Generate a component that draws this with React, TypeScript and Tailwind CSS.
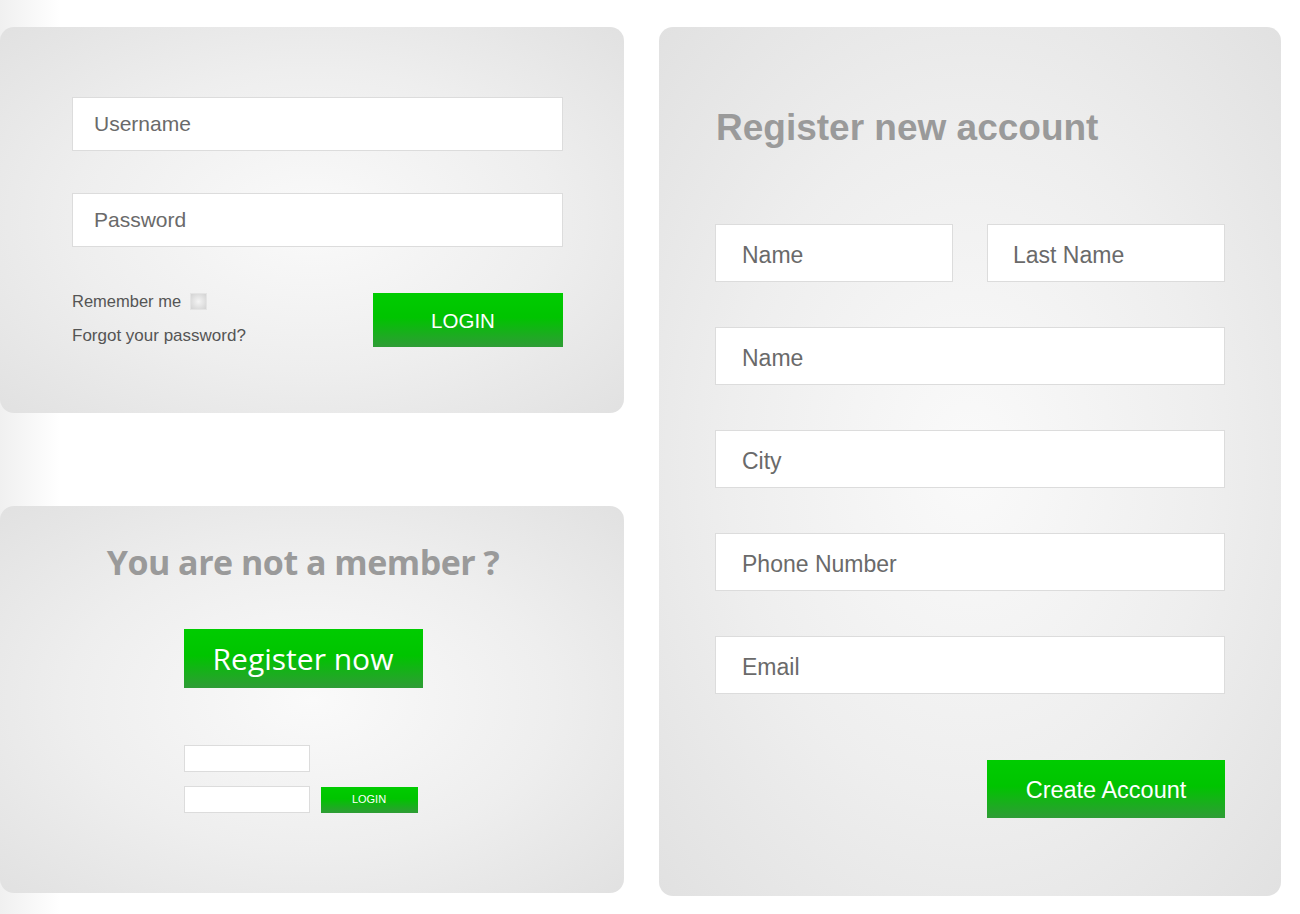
import React from "react";

const panelBg =
  "bg-[radial-gradient(ellipse_at_center,#fafafa_0%,#eeeeee_55%,#e1e1e1_100%)]";
const greenBtn =
  "bg-[linear-gradient(to_bottom,#00cc00_0%,#00c400_45%,#2f9c36_100%)] text-white";

function Field({ label, className }: { label: string; className: string }) {
  return (
    <div
      className={`flex items-center bg-white border border-[#dcdcdc] text-[#6a6a6a] ${className}`}
    >
      {label}
    </div>
  );
}

export default function App() {
  return (
    <div
      className="w-[1300px] h-[914px] bg-[linear-gradient(to_right,#f0f0f0_0px,#ffffff_60px)] pt-[27px] flex gap-[35px] overflow-hidden"
      style={{ fontFamily: '"Liberation Sans", Arial, sans-serif' }}
    >
      <div className="w-[624px] flex flex-col gap-[93px]">
        {/* login */}
        <div className={`h-[386px] rounded-[14px] ${panelBg} pt-[70px] px-[72px] pr-[61px]`}>
          <Field label="Username" className="h-[54px] pl-[21px] text-[21px]" />
          <Field label="Password" className="h-[54px] pl-[21px] text-[21px] mt-[42px]" />
          <div className="flex justify-between mt-[46px]">
            <div className="text-[16.5px] text-[#555]">
              <div className="flex items-center h-[18px] mt-[-1px]">
                Remember me
                <span className="ml-[9px] w-[17px] h-[17px] border border-[#e4e4e4] bg-[radial-gradient(circle,#f4f4f4_0%,#d2d2d2_100%)]" />
              </div>
              <div className="mt-[13px] text-[17px]">Forgot your password?</div>
            </div>
            <button className={`w-[190px] h-[54px] ${greenBtn} text-[20.5px] pt-[2px] pr-[10px]`}>
              LOGIN
            </button>
          </div>
        </div>

        {/* register teaser */}
        <div className={`h-[387px] rounded-[14px] ${panelBg} flex flex-col items-center pr-[18px]`}>
          <div
            className="mt-[31px] text-[#9a9a9a] text-[34px] font-bold tracking-[-0.5px]"
            style={{ fontFamily: '"Open Sans", sans-serif' }}
          >
            You are not a member ?
          </div>
          <button
            className={`mt-[41px] w-[239px] h-[59px] ${greenBtn} text-[30px]`}
            style={{ fontFamily: '"Open Sans", sans-serif' }}
          >
            Register now
          </button>
          <div className="mt-[57px] w-[234px] mr-[5px]">
            <div className="w-[126px] h-[27px] bg-white border border-[#dcdcdc]" />
            <div className="flex items-center gap-[11px] mt-[14px]">
              <div className="w-[126px] h-[27px] bg-white border border-[#dcdcdc]" />
              <button className={`w-[97px] h-[26px] ${greenBtn} text-[11px]`}>LOGIN</button>
            </div>
          </div>
        </div>
      </div>

      {/* register form */}
      <div className={`w-[622px] h-[869px] rounded-[14px] ${panelBg} pl-[56px] pr-[56px]`}>
        <div className="mt-[80px] text-[37px] font-bold text-[#9a9a9a] leading-[42px] pl-[1px]">
          Register new account
        </div>
        <div className="flex gap-[34px] mt-[75px]">
          <Field label="Name" className="w-[238px] h-[58px] pl-[26px] pt-[4px] text-[23px]" />
          <Field label="Last Name" className="w-[238px] h-[58px] pl-[25px] pt-[4px] text-[23px]" />
        </div>
        <div className="flex flex-col gap-[45px] mt-[45px]">
          <Field label="Name" className="w-[510px] h-[58px] pl-[26px] pt-[4px] text-[23px]" />
          <Field label="City" className="w-[510px] h-[58px] pl-[26px] pt-[4px] text-[23px]" />
          <Field label="Phone Number" className="w-[510px] h-[58px] pl-[26px] pt-[4px] text-[23px]" />
          <Field label="Email" className="w-[510px] h-[58px] pl-[26px] pt-[4px] text-[23px]" />
        </div>
        <div className="flex justify-end w-[510px] mt-[66px]">
          <button className={`w-[238px] h-[58px] ${greenBtn} text-[23.5px] pt-[3px]`}>
            Create Account
          </button>
        </div>
      </div>
    </div>
  );
}
